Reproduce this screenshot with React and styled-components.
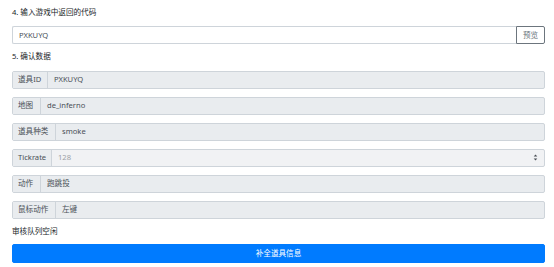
import React from "react";
import styled, { createGlobalStyle } from "styled-components";

const GlobalStyle = createGlobalStyle`
  body {
    margin: 0;
    background: #fff;
    font-family: "Noto Sans", "Noto Sans CJK SC", sans-serif;
    color: #212529;
  }
`;

const Page = styled.div`
  display: flex;
  flex-direction: column;
  padding: 7px 9px 0 12px;
  font-size: 7.6px;
  line-height: 11px;
`;

const Label = styled.div`
  margin-bottom: ${(p) => p.$mb || 8}px;
`;

const CodeRow = styled.div`
  display: flex;
  height: 18px;
  margin-bottom: 7px;
`;

const CodeInput = styled.div`
  flex: 1;
  display: flex;
  align-items: center;
  padding: 0 6px;
  border: 1px solid #ced4da;
  border-right: none;
  border-radius: 2px 0 0 2px;
  color: #495057;
`;

const PreviewButton = styled.button`
  width: 29px;
  height: 18px;
  padding: 0;
  border: 1px solid #6c757d;
  border-radius: 0 2px 2px 0;
  background: #fff;
  color: #6c757d;
  font: inherit;
`;

const Group = styled.div`
  display: flex;
  height: 18px;
  margin-bottom: 8px;
  border: 1px solid #ced4da;
  border-radius: 2px;
  box-sizing: border-box;
  background: ${(p) => (p.$select ? "#f1f2f4" : "#e9ecef")};
  color: #495057;
`;

const Prepend = styled.div`
  width: ${(p) => p.$w}px;
  flex-shrink: 0;
  box-sizing: border-box;
  display: flex;
  align-items: center;
  padding-left: 5px;
  border-right: 1px solid #ced4da;
  background: #e9ecef;
`;

const Value = styled.div`
  flex: 1;
  display: flex;
  align-items: center;
  justify-content: space-between;
  padding: 0 6px;
  color: ${(p) => (p.$muted ? "#9ba1a7" : "#495057")};
`;

const Status = styled.div`
  margin: -1px 0 7px;
`;

const SubmitButton = styled.button`
  height: 19px;
  padding: 0;
  border: 1px solid #007bff;
  border-radius: 2px;
  background: #007bff;
  color: #fff;
  font: inherit;
`;

const Caret = () => (
  <svg width="5" height="7" viewBox="0 0 5 7">
    <path d="M2.5 0.5 L4.3 2.6 H0.7 Z M2.5 6.5 L4.3 4.4 H0.7 Z" fill="#4a4f55" />
  </svg>
);

const rows = [
  { label: "道具ID", w: 35, value: "PXKUYQ" },
  { label: "地图", w: 28, value: "de_inferno" },
  { label: "道具种类", w: 43, value: "smoke" },
  { label: "Tickrate", w: 39, value: "128", select: true },
  { label: "动作", w: 28, value: "跑跳投" },
  { label: "鼠标动作", w: 43, value: "左键" },
];

export default function App() {
  return (
    <>
      <GlobalStyle />
      <Page>
        <Label>4. 输入游戏中返回的代码</Label>
        <CodeRow>
          <CodeInput>PXKUYQ</CodeInput>
          <PreviewButton>预览</PreviewButton>
        </CodeRow>
        <Label $mb={8.5}>5. 确认数据</Label>
        {rows.map((r) => (
          <Group key={r.label} $select={r.select}>
            <Prepend $w={r.w}>{r.label}</Prepend>
            <Value $muted={r.select}>
              {r.value}
              {r.select && <Caret />}
            </Value>
          </Group>
        ))}
        <Status>审核队列空闲</Status>
        <SubmitButton>补全道具信息</SubmitButton>
      </Page>
    </>
  );
}
